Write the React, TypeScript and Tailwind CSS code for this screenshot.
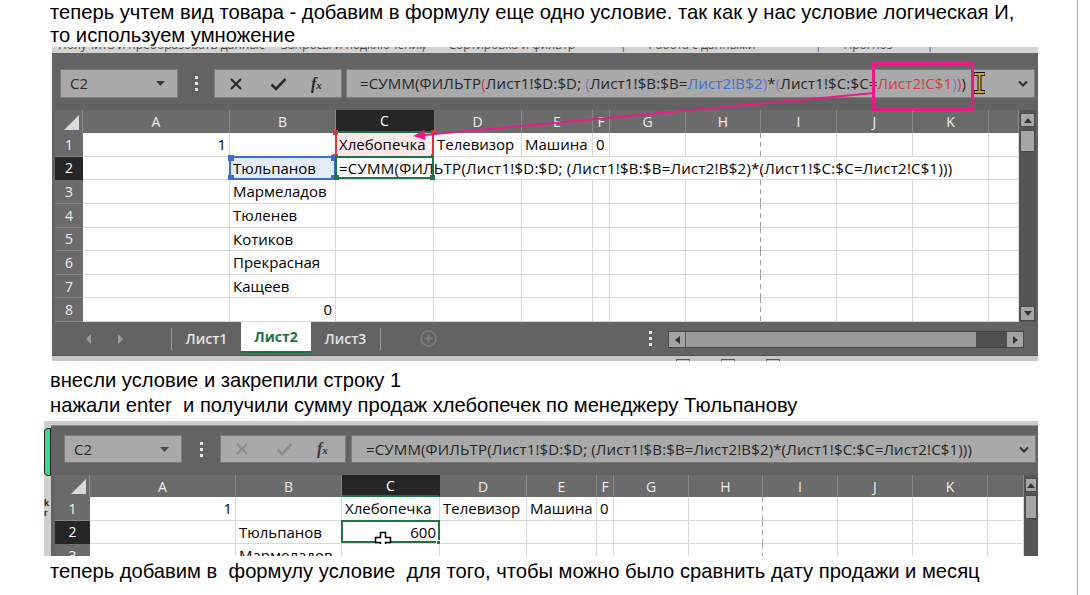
import type { ReactNode } from "react";

type Col = { l: string; w: string; dash?: boolean };
type CellDef = { t?: ReactNode; right?: boolean; cls?: string; w?: string; span?: number; over?: ReactNode };

const cols1: Col[] = [
  { l: "A", w: "w-[147px]" },
  { l: "B", w: "w-[106px]" },
  { l: "C", w: "w-[98px]" },
  { l: "D", w: "w-[88px]" },
  { l: "E", w: "w-[71px]" },
  { l: "F", w: "w-[17px]" },
  { l: "G", w: "w-[76px]" },
  { l: "H", w: "w-[75px]", dash: true },
  { l: "I", w: "w-[76px]" },
  { l: "J", w: "w-[76px]" },
  { l: "K", w: "w-[76px]" },
  { l: "", w: "w-[30px]" },
];

const cols2: Col[] = [
  { l: "A", w: "w-[146px]" },
  { l: "B", w: "w-[106px]" },
  { l: "C", w: "w-[98px]" },
  { l: "D", w: "w-[87px]" },
  { l: "E", w: "w-[70px]" },
  { l: "F", w: "w-[17px]" },
  { l: "G", w: "w-[75px]" },
  { l: "H", w: "w-[74px]", dash: true },
  { l: "I", w: "w-[75px]" },
  { l: "J", w: "w-[75px]" },
  { l: "K", w: "w-[75px]" },
  { l: "", w: "w-[36px]" },
];

const names = ["Мармеладов", "Тюленев", "Котиков", "Прекрасная", "Кащеев"];

function ColHeads({ cols, head, h }: { cols: Col[]; head: string; h: string }) {
  return (
    <div className={`flex shrink-0 ${h}`}>
      <div className={`${head} relative shrink-0 bg-[#6b6b6b] border-r border-[#878787]`}>
        <svg className="absolute right-[3px] bottom-[3px]" width="15" height="15" viewBox="0 0 15 15">
          <path d="M15 0V15H0Z" fill="#dadada" />
        </svg>
      </div>
      {cols.map((c, i) => (
        <div
          key={i}
          className={`${c.w} shrink-0 flex items-center justify-center text-[14px] border-r ${
            c.l === "C"
              ? "bg-[#262626] text-white border-[#262626] border-b-2 border-b-[#1f7244]"
              : "bg-[#6b6b6b] text-[#eeeeee] border-[#878787]"
          }`}
        >
          {c.l}
        </div>
      ))}
    </div>
  );
}

function Row({ n, cols, head, h, active, cells = {} }: { n: number; cols: Col[]; head: string; h: string; active?: boolean; cells?: Record<number, CellDef> }) {
  const out: ReactNode[] = [];
  for (let i = 0; i < cols.length; i++) {
    const d = cells[i];
    const span = d?.span ?? 1;
    const last = cols[i + span - 1];
    out.push(
      <div
        key={i}
        className={`${d?.w ?? cols[i].w} shrink-0 relative flex items-center px-[3px] whitespace-nowrap border-b border-[#d8d8d8] ${
          last.dash ? "" : "border-r"
        } ${d?.right ? "justify-end" : ""} ${d?.cls ?? "bg-white"}`}
      >
        {d?.t}
        {last.dash && (
          <span className="absolute right-0 top-0 -bottom-px w-px bg-[repeating-linear-gradient(to_bottom,#9d9d9d_0_5px,transparent_5px_9px)]" />
        )}
        {d?.over}
      </div>
    );
    i += span - 1;
  }
  return (
    <div className={`flex shrink-0 ${h}`}>
      <div
        className={`${head} shrink-0 flex items-center justify-center text-[14px] border-b ${
          active ? "bg-[#262626] text-white border-[#262626]" : "bg-[#6b6b6b] text-[#f0f0f0] border-[#878787]"
        }`}
      >
        {n}
      </div>
      {out}
    </div>
  );
}

function Corners({ color, s, bottomOnly }: { color: string; s: string; bottomOnly?: boolean }) {
  return (
    <>
      {!bottomOnly && <span className={`absolute -left-[3px] -top-[3px] ${s} ${color}`} />}
      {!bottomOnly && <span className={`absolute -right-[3px] -top-[3px] ${s} ${color}`} />}
      <span className={`absolute -left-[3px] -bottom-[3px] ${s} ${color}`} />
      <span className={`absolute -right-[3px] -bottom-[3px] ${s} ${color}`} />
    </>
  );
}

function NameBox({ dim }: { dim?: boolean }) {
  return (
    <div className="w-[118px] shrink-0 bg-[#a9a9a9] border border-[#7c7c7c] flex items-center pl-[9px] pr-[12px] text-[15px] text-[#2a2a2a]">
      C2
      <svg className="ml-auto" width="9" height="5" viewBox="0 0 9 5">
        <path d="M0 0H9L4.5 5Z" fill={dim ? "#4a4a4a" : "#3a3a3a"} />
      </svg>
    </div>
  );
}

function Dots({ w }: { w: string }) {
  return (
    <div className={`${w} shrink-0 flex flex-col items-center justify-center gap-[3px]`}>
      <span className="w-[3px] h-[3px] bg-[#e6e6e6]" />
      <span className="w-[3px] h-[3px] bg-[#e6e6e6]" />
      <span className="w-[3px] h-[3px] bg-[#e6e6e6]" />
    </div>
  );
}

function Buttons({ w, dim }: { w: string; dim?: boolean }) {
  const c = dim ? "#8c8c8c" : "#2b2b2b";
  return (
    <div className={`${w} shrink-0 bg-[#a9a9a9] border border-[#7c7c7c] flex items-center`}>
      <svg className="ml-[14px]" width="14" height="14" viewBox="0 0 14 14">
        <path d="M2 2L12 12M12 2L2 12" stroke={c} strokeWidth="2" />
      </svg>
      <svg className="ml-[27px]" width="17" height="14" viewBox="0 0 17 14">
        <path d="M1.5 7.5L6 12L15.5 2" stroke={c} strokeWidth="2.6" fill="none" />
      </svg>
      <span className={`ml-[24px] font-['Liberation_Serif',serif] italic font-bold text-[16px] leading-none ${dim ? "text-[#3a3a3a]" : "text-[#2b2b2b]"}`}>
        f<span className="text-[11px]">x</span>
      </span>
    </div>
  );
}

function Chevron() {
  return (
    <svg className="ml-auto mr-[6px]" width="10" height="7" viewBox="0 0 10 7">
      <path d="M1 1.5L5 5.5L9 1.5" stroke="#2f2f2f" strokeWidth="2" fill="none" />
    </svg>
  );
}

function VScroll({ w, thumb }: { w: string; thumb: string }) {
  return (
    <div className={`${w} shrink-0 bg-[#555555] flex flex-col px-px`}>
      <div className="mt-[3px] h-[14px] bg-[#a6a6a6] border border-[#4a4a4a] flex items-center justify-center">
        <svg width="8" height="5" viewBox="0 0 8 5">
          <path d="M0 5H8L4 0Z" fill="#333" />
        </svg>
      </div>
      <div className={`mt-[3px] ${thumb} bg-[#a6a6a6] border border-[#4a4a4a]`} />
      <div className="flex-1" />
      <div className="mb-px h-[15px] bg-[#a6a6a6] border border-[#4a4a4a] flex items-center justify-center">
        <svg width="8" height="5" viewBox="0 0 8 5">
          <path d="M0 0H8L4 5Z" fill="#333" />
        </svg>
      </div>
    </div>
  );
}

function Formula1() {
  return (
    <span className="tracking-[0.15px]">
      =СУММ(ФИЛЬТР<span className="text-[#d23b48]">(</span>Лист1!$D:$D; <span className="text-[#8a6cc8]">(</span>Лист1!$B:$B=
      <span className="text-[#3b6fd6]">Лист2!B$2</span>
      <span className="text-[#8a6cc8]">)</span>*<span className="text-[#8a6cc8]">(</span>Лист1!$C:$C=
      <span className="text-[#d23b48]">Лист2!C$1</span>
      <span className="text-[#8a6cc8]">)</span>
      <span className="text-[#d23b48]">)</span>)
    </span>
  );
}

const formula = "=СУММ(ФИЛЬТР(Лист1!$D:$D; (Лист1!$B:$B=Лист2!B$2)*(Лист1!$C:$C=Лист2!C$1)))";

function Excel1() {
  const rowH = "h-[23.625px]";
  const head = "w-[28px]";
  return (
    <div className="relative ml-[52px] w-[986px] h-[314px] shrink-0 bg-[#636363] overflow-hidden flex flex-col font-['Open_Sans',sans-serif]">
      {/* ribbon leftovers, cut in half */}
      <div className="h-[6px] shrink-0 bg-[#d3d3d3] overflow-hidden">
        <div className="-mt-[10px] flex whitespace-pre text-[12px] leading-[16px] text-[#4a4a4a]">
          <span className="w-[368px] pl-[6px]">Получить и преобразовать данные     Запросы и подключения</span>
          <span className="w-[200px]">|       Сортировка и фильтр</span>
          <span className="w-[195px]">|       Работа с данными</span>
          <span className="w-[200px]">|       Прогноз           |</span>
        </div>
      </div>

      {/* formula bar */}
      <div className="mt-[16px] h-[29px] shrink-0 flex pl-[8px]">
        <NameBox />
        <Dots w="w-[36px]" />
        <Buttons w="w-[128px]" />
        <div className="ml-[4px] w-[689px] shrink-0 bg-[#a9a9a9] border border-[#7c7c7c] flex items-center pl-[13px] text-[15px] text-[#262626] whitespace-nowrap">
          <Formula1 />
          <Chevron />
        </div>
      </div>

      {/* grid */}
      <div className="mt-[12px] shrink-0 flex">
        <div className="w-[3px] shrink-0" />
        <div className="flex flex-col text-[15px] text-black">
          <ColHeads cols={cols1} head={head} h="h-[23px]" />
          <Row
            n={1}
            cols={cols1}
            head={head}
            h={rowH}
            cells={{
              0: { t: "1", right: true },
              2: {
                t: "Хлебопечка",
                cls: "bg-[#fbe8e8]",
                over: (
                  <>
                    <span className="absolute -left-px -top-px w-[2px] h-[calc(100%+1px)] bg-[#d4373f]" />
                    <span className="absolute -right-px -top-px w-[2px] h-[calc(100%+1px)] bg-[#d4373f]" />
                    <Corners color="bg-[#d4373f]" s="w-[5px] h-[5px]" />
                  </>
                ),
              },
              3: { t: "Телевизор" },
              4: { t: "Машина" },
              5: { t: "0" },
            }}
          />
          <Row
            n={2}
            cols={cols1}
            head={head}
            h={rowH}
            active
            cells={{
              1: {
                t: "Тюльпанов",
                cls: "bg-[#e3ecf8]",
                over: (
                  <span className="absolute -left-px -top-px -right-px -bottom-px border-2 border-[#3b6fd4]">
                    <Corners color="bg-[#3b6fd4]" s="w-[6px] h-[6px]" />
                  </span>
                ),
              },
              2: {
                span: 9,
                w: "w-[653px]",
                t: <span className="tracking-[0.25px]">{formula}</span>,
                cls: "bg-white",
                over: (
                  <span className="absolute -left-px -top-px w-[99px] h-[calc(100%+1px)] border-2 border-[#217346]">
                    <Corners color="bg-[#217346]" s="w-[5px] h-[5px]" bottomOnly />
                  </span>
                ),
              },
            }}
          />
          {names.map((nm, i) => (
            <Row key={nm} n={i + 3} cols={cols1} head={head} h={rowH} cells={{ 1: { t: nm } }} />
          ))}
          <Row n={8} cols={cols1} head={head} h={rowH} cells={{ 1: { t: "0", right: true } }} />
        </div>
        <VScroll w="w-[17px]" thumb="h-[22px]" />
      </div>

      {/* sheet tabs + horizontal scroll */}
      <div className="h-[33px] shrink-0 flex text-[14px] font-semibold">
        <div className="w-[31px] shrink-0" />
        <svg className="self-center" width="12" height="10" viewBox="0 0 12 10">
          <path d="M8 0V10L3 5Z" fill="#9c9c9c" />
        </svg>
        <div className="w-[19px] shrink-0" />
        <svg className="self-center" width="12" height="10" viewBox="0 0 12 10">
          <path d="M4 0V10L9 5Z" fill="#9c9c9c" />
        </svg>
        <div className="w-[45px] shrink-0" />
        <div className="w-px h-[22px] self-center bg-[#9a9a9a]" />
        <div className="w-[69px] shrink-0 flex items-center justify-center text-[#e4e4e4]">Лист1</div>
        <div className="w-[70px] h-[31px] shrink-0 flex items-center justify-center bg-white text-[#1e7145] font-bold border-b-2 border-[#1e7145]">Лист2</div>
        <div className="w-[69px] shrink-0 flex items-center justify-center text-[#e4e4e4]">Лист3</div>
        <div className="w-px h-[22px] self-center bg-[#9a9a9a]" />
        <div className="w-[39px] shrink-0" />
        <svg className="self-center" width="17" height="17" viewBox="0 0 17 17">
          <circle cx="8.5" cy="8.5" r="7.5" stroke="#7c7c7c" strokeWidth="1.5" fill="none" />
          <path d="M8.5 4.5V12.5M4.5 8.5H12.5" stroke="#7c7c7c" strokeWidth="1.8" />
        </svg>
        <div className="w-[211px] shrink-0" />
        <div className="w-[4px] shrink-0 flex flex-col items-center justify-center gap-[3px]">
          <span className="w-[3px] h-[3px] bg-[#e6e6e6]" />
          <span className="w-[3px] h-[3px] bg-[#e6e6e6]" />
          <span className="w-[3px] h-[3px] bg-[#e6e6e6]" />
        </div>
        <div className="w-[16px] shrink-0" />
        <div className="mt-[9px] w-[356px] h-[17px] shrink-0 flex bg-[#505050] border border-[#474747]">
          <div className="w-[17px] bg-[#a3a3a3] border-r border-[#555] flex items-center justify-center">
            <svg width="5" height="8" viewBox="0 0 5 8">
              <path d="M5 0V8L0 4Z" fill="#333" />
            </svg>
          </div>
          <div className="w-[290px] bg-[#9a9a9a]" />
          <div className="flex-1" />
          <div className="w-[17px] bg-[#a3a3a3] border-l border-[#555] flex items-center justify-center">
            <svg width="5" height="8" viewBox="0 0 5 8">
              <path d="M0 0V8L5 4Z" fill="#333" />
            </svg>
          </div>
        </div>
      </div>

      {/* status bar, cut */}
      <div className="flex-1 bg-[#c6c6c6] border-t border-[#555] flex">
        <div className="w-[624px] shrink-0" />
        <span className="mt-[3px] w-[14px] h-[6px] border border-[#555] border-b-0" />
        <div className="w-[31px] shrink-0" />
        <span className="mt-[3px] w-[14px] h-[6px] border border-[#555] border-b-0" />
        <div className="w-[31px] shrink-0" />
        <span className="mt-[3px] w-[14px] h-[6px] border border-[#555] border-b-0" />
      </div>

      {/* pink annotation */}
      <svg className="absolute inset-0 pointer-events-none" width="986" height="314" viewBox="0 0 986 314">
        <rect x="821.5" y="16.5" width="99" height="46" stroke="#ec1a86" strokeWidth="3" fill="none" />
        <path d="M823 46L372 88" stroke="#ec1a86" strokeWidth="2" />
        <path d="M361 89L373.5 93L372.5 83Z" fill="#ec1a86" />
        <path d="M922 27H933M922 45H933M927.5 27V45" stroke="#111" strokeWidth="4" />
        <path d="M922.5 27H932.5M922.5 45H932.5M927.5 27V45" stroke="#d9a21b" strokeWidth="2" />
      </svg>
    </div>
  );
}

function Excel2() {
  const rowH = "h-[23.5px]";
  const head = "w-[35px]";
  return (
    <div className="ml-[44px] flex shrink-0">
      <div className="w-[7px] h-[135px] shrink-0 bg-[#cfcfcf] flex flex-col">
        <div className="mt-[7px] h-[48px] bg-[#3ed98c] border border-[#1b1b1b] rounded-l-[4px]" />
        <div className="mt-[22px] text-[9px] leading-[10px] font-bold text-[#222] font-['Liberation_Sans',sans-serif]">k</div>
        <div className="text-[9px] leading-[10px] font-bold text-[#222] font-['Liberation_Sans',sans-serif]">г</div>
      </div>
      <div className="w-[987px] h-[135px] shrink-0 bg-[#636363] overflow-hidden flex flex-col font-['Open_Sans',sans-serif]">
        <div className="h-[5px] shrink-0 bg-[#cdcdcd] border-b border-[#8a8a8a]" />
        <div className="mt-[9px] h-[28px] shrink-0 flex pl-[13px]">
          <NameBox dim />
          <Dots w="w-[38px]" />
          <Buttons w="w-[126px]" dim />
          <div className="ml-[5px] w-[685px] shrink-0 bg-[#a9a9a9] border border-[#7c7c7c] flex items-center pl-[14px] text-[15px] text-[#262626] whitespace-nowrap">
            <span className="tracking-[0.15px]">{formula}</span>
            <Chevron />
          </div>
        </div>
        <div className="mt-[12px] shrink-0 flex">
          <div className="w-[4px] shrink-0" />
          <div className="flex flex-col text-[15px] text-black">
            <ColHeads cols={cols2} head={head} h="h-[22px]" />
            <Row
              n={1}
              cols={cols2}
              head={head}
              h={rowH}
              cells={{ 0: { t: "1", right: true }, 2: { t: "Хлебопечка" }, 3: { t: "Телевизор" }, 4: { t: "Машина" }, 5: { t: "0" } }}
            />
            <Row
              n={2}
              cols={cols2}
              head={head}
              h={rowH}
              active
              cells={{
                1: { t: "Тюльпанов" },
                2: {
                  t: "600",
                  right: true,
                  over: (
                    <>
                      <span className="absolute -left-px -top-px w-[99px] h-[calc(100%+1px)] border-2 border-[#217346]" />
                      <span className="absolute -right-[4px] -bottom-[4px] w-[7px] h-[7px] bg-[#217346] border border-white" />
                      <svg className="absolute left-[32px] top-[10px]" width="18" height="18" viewBox="0 0 18 18">
                        <path d="M6.5 1.5H11.5V6.5H16.5V11.5H11.5V16.5H6.5V11.5H1.5V6.5H6.5Z" fill="#fff" stroke="#000" strokeWidth="1.5" />
                      </svg>
                    </>
                  ),
                },
              }}
            />
            <Row n={3} cols={cols2} head={head} h={rowH} cells={{ 1: { t: "Мармеладов" } }} />
          </div>
          <div className="w-[14px] shrink-0 bg-[#555555] px-px">
            <div className="mt-[3px] h-[14px] bg-[#a6a6a6] border border-[#4a4a4a] flex items-center justify-center">
              <svg width="8" height="5" viewBox="0 0 8 5">
                <path d="M0 5H8L4 0Z" fill="#333" />
              </svg>
            </div>
            <div className="mt-[3px] h-[24px] bg-[#a6a6a6] border border-[#4a4a4a]" />
          </div>
        </div>
      </div>
    </div>
  );
}

export default function App() {
  return (
    <div className="w-[1090px] h-[595px] bg-white overflow-hidden flex">
      <div className="w-[1078px] h-full shrink-0 flex flex-col border-r border-[#a8a8a8] font-['Liberation_Sans',Arial,sans-serif] text-[20.2px] text-black">
        <div className="pl-[50px] pt-[1px] h-[47px] shrink-0 leading-[23px]">
          <p>теперь учтем вид товара - добавим в формулу еще одно условие. так как у нас условие логическая И,</p>
          <p>то используем умножение</p>
        </div>
        <Excel1 />
        <div className="pl-[50px] mt-[7px] leading-[25px] whitespace-pre shrink-0">
          <p>внесли условие и закрепили строку 1</p>
          <p>нажали enter  и получили сумму продаж хлебопечек по менеджеру Тюльпанову</p>
        </div>
        <div className="mt-[3px] shrink-0">
          <Excel2 />
        </div>
        <p className="pl-[50px] mt-[4px] leading-[23px] whitespace-pre">теперь добавим в  формулу условие  для того, чтобы можно было сравнить дату продажи и месяц</p>
      </div>
    </div>
  );
}
